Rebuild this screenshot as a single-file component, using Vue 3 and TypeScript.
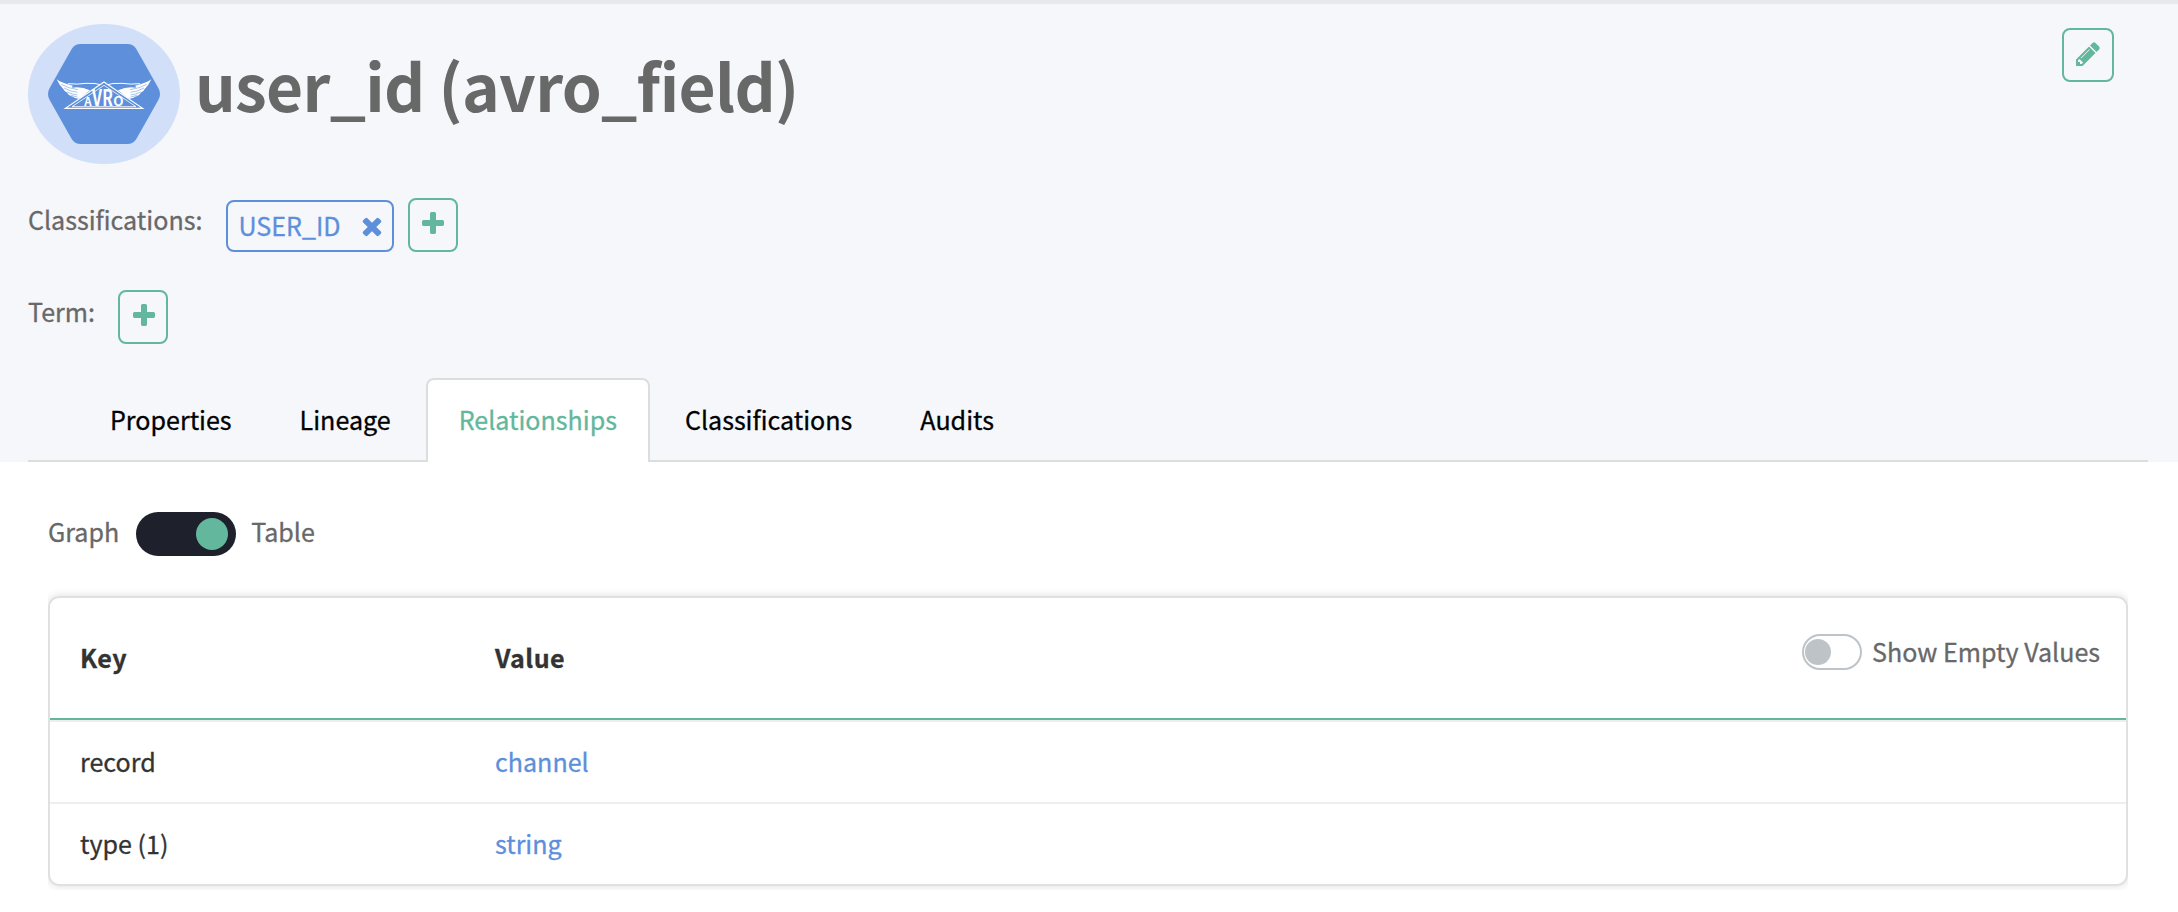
<script setup lang="ts">
import { ref } from 'vue'

interface Tab {
  id: string
  label: string
}

interface RelationRow {
  key: string
  value: string
}

const tabs: Tab[] = [
  { id: 'properties', label: 'Properties' },
  { id: 'lineage', label: 'Lineage' },
  { id: 'relationships', label: 'Relationships' },
  { id: 'classifications', label: 'Classifications' },
  { id: 'audits', label: 'Audits' },
]

const rows: RelationRow[] = [
  { key: 'record', value: 'channel' },
  { key: 'type (1)', value: 'string' },
]

const activeTab = ref('relationships')
const tableView = ref(true)
const showEmpty = ref(false)

const plusPath =
  'M1600 736v192q0 40-28 68t-68 28h-416v416q0 40-28 68t-68 28h-192q-40 0-68-28t-28-68v-416h-416q-40 0-68-28t-28-68v-192q0-40 28-68t68-28h416v-416q0-40 28-68t68-28h192q40 0 68 28t28 68v416h416q40 0 68 28t28 68z'
const timesPath =
  'M1490 1322q0 40-28 68l-136 136q-28 28-68 28t-68-28l-294-294-294 294q-28 28-68 28t-68-28l-136-136q-28-28-28-68t28-68l294-294-294-294q-28-28-28-68t28-68l136-136q28-28 68-28t68 28l294 294 294-294q28-28 68-28t68 28l136 136q28 28 28 68t-28 68l-294 294 294 294q28 28 28 68z'
const pencilPath =
  'M491 1536l91-91-235-235-91 91v107h128v128h107zm523-928q0-22-22-22-10 0-17 7l-542 542q-7 7-7 17 0 22 22 22 10 0 17-7l542-542q7-7 7-17zm-54-192l416 416-832 832h-416v-416zm683 96q0 53-37 90l-166 166-416-416 166-165q36-38 90-38 53 0 91 38l235 234q37 39 37 91z'
</script>

<template>
  <main class="page">
    <header class="header">
      <div class="title-row">
        <div class="avatar">
          <svg class="avro" viewBox="24 42 336 300">
            <path
              class="hex"
              d="M122 42H262Q280 42 289 57L355 174Q365 192 355 210L289 327Q280 342 262 342H122Q104 342 95 327L29 210Q19 192 29 174L95 57Q104 42 122 42Z"
            />
            <g id="wing">
              <path class="fill" d="M50 148Q66 160 98 167L96 173Q122 168 150 181L118 206Q103 205 99 200Q84 196 82 188Q72 184 70 177Q58 166 50 148Z" />
              <path class="cut" d="M64 163Q84 175 114 179M72 174Q90 184 112 187M82 186Q96 193 112 195M92 195Q104 200 112 201" />
              <path class="arc" d="M84 161Q112 164 138 160Q166 158 190 166" />
            </g>
            <use href="#wing" transform="translate(384 0) scale(-1 1)" />
            <path class="tri" d="M192 156L308 235H76Z" />
            <path class="tri-in" d="M192 166L288 230H96Z" />
            <text class="letter" x="133" y="228" font-size="34" textLength="22" lengthAdjust="spacingAndGlyphs">A</text>
            <text class="letter" x="156" y="228" font-size="66" textLength="30" lengthAdjust="spacingAndGlyphs">V</text>
            <text class="letter" x="187" y="228" font-size="66" textLength="32" lengthAdjust="spacingAndGlyphs">R</text>
            <text class="letter" x="220" y="228" font-size="38" textLength="31" lengthAdjust="spacingAndGlyphs">O</text>
          </svg>
        </div>
        <h1 class="title">user_id (avro_field)</h1>
        <button class="btn edit" aria-label="Edit">
          <svg class="icon" viewBox="0 0 1792 1792"><path :d="pencilPath" /></svg>
        </button>
      </div>

      <div class="meta-row">
        <span class="label classifications-label">Classifications:</span>
        <span class="tag">
          <span class="tag-name">USER_ID</span>
          <svg class="icon" viewBox="0 0 1792 1792"><path :d="timesPath" /></svg>
        </span>
        <button class="btn add" aria-label="Add classification">
          <svg class="icon" viewBox="0 0 1792 1792"><path :d="plusPath" /></svg>
        </button>
      </div>

      <div class="meta-row">
        <span class="label term-label">Term:</span>
        <button class="btn add add-term" aria-label="Add term">
          <svg class="icon" viewBox="0 0 1792 1792"><path :d="plusPath" /></svg>
        </button>
      </div>

      <nav class="tabs">
        <a
          v-for="tab in tabs"
          :key="tab.id"
          class="tab"
          :class="{ active: tab.id === activeTab }"
          @click="activeTab = tab.id"
          >{{ tab.label }}</a
        >
      </nav>
    </header>

    <section class="content">
      <div class="view-toggle">
        <span class="view-name">Graph</span>
        <span class="switch" :class="{ on: tableView }" @click="tableView = !tableView"><i class="knob"></i></span>
        <span class="view-name">Table</span>
      </div>

      <div class="card">
        <div class="card-head">
          <span class="key">Key</span>
          <span class="value">Value</span>
          <span class="empty-toggle" @click="showEmpty = !showEmpty">
            <span class="small-switch" :class="{ on: showEmpty }"><i class="small-knob"></i></span>
            <span class="empty-label">Show Empty Values</span>
          </span>
        </div>
        <div v-for="row in rows" :key="row.key" class="card-row">
          <span class="key">{{ row.key }}</span>
          <a class="value link">{{ row.value }}</a>
        </div>
      </div>
    </section>
  </main>
</template>

<style>
body {
  background: #fff;
}
</style>

<style scoped>
.page {
  height: 912px;
  box-sizing: border-box;
  overflow: hidden;
  font-family: 'Noto Sans CJK SC', 'Noto Sans', sans-serif;
  font-size: 25.07px;
  line-height: 36px;
  color: #686868;
  white-space: nowrap;
  -webkit-text-stroke: 0.3px currentColor;
}
.header {
  box-sizing: border-box;
  height: 462px;
  padding: 20px 30px 0 28px;
  border-top: 4px solid #e8e9ed;
  background: #f6f7fb;
}
.title-row {
  display: flex;
  align-items: flex-start;
  height: 140px;
}
.avatar {
  display: flex;
  align-items: center;
  justify-content: center;
  width: 152px;
  height: 140px;
  border-radius: 50%;
  background: #d1dff9;
}
.avro {
  width: 112px;
  height: 100px;
}
.hex {
  fill: #5d8fdb;
}
.fill {
  fill: #fff;
}
.cut {
  fill: none;
  stroke: #5d8fdb;
  stroke-width: 1.6;
}
.arc {
  fill: none;
  stroke: #fff;
  stroke-width: 3;
}
.tri {
  fill: #5d8fdb;
  stroke: #fff;
  stroke-width: 3.5;
}
.tri-in {
  fill: none;
  stroke: #fff;
  stroke-width: 2.5;
}
.letter {
  fill: #fff;
  font-family: 'Noto Sans CJK SC', sans-serif;
  font-weight: 700;
  -webkit-text-stroke: 0;
}
.title {
  margin: 10px 0 0 15px;
  font-size: 64px;
  font-weight: 600;
  letter-spacing: -0.7px;
  line-height: 100px;
  -webkit-text-stroke: 0;
}
.btn {
  display: flex;
  justify-content: center;
  box-sizing: border-box;
  height: 54px;
  padding: 10px 0 0;
  border: 2px solid #62b79c;
  border-radius: 8px;
  background: transparent;
  color: #62b79c;
}
.edit {
  width: 52px;
  margin: 4px 34px 0 auto;
}
.add {
  width: 50px;
}
.add-term {
  padding-left: 2px;
}
.icon {
  flex: none;
  width: 28px;
  height: 28px;
  fill: currentColor;
}
.meta-row {
  display: flex;
  align-items: flex-start;
  height: 54px;
  margin-top: 34px;
}
.meta-row + .meta-row {
  margin-top: 38px;
}
.label {
  margin-top: 3px;
}
.classifications-label {
  width: 198px;
}
.term-label {
  width: 90px;
}
.tag {
  display: flex;
  justify-content: space-between;
  box-sizing: border-box;
  width: 168px;
  height: 52px;
  margin: 2px 14px 0 0;
  padding: 0 6.5px 0 10.5px;
  border: 2px solid #5d8fdb;
  border-radius: 8px;
  color: #5d8fdb;
  line-height: 46px;
}
.tag .icon {
  margin-top: 10px;
}
.tabs {
  display: flex;
  margin-top: 34px;
  padding-left: 48px;
  height: 84px;
  box-sizing: border-box;
  border-bottom: 2px solid #dcdddd;
}
.tab {
  box-sizing: border-box;
  height: 84px;
  padding: 0 31px;
  margin: 0 1px;
  border: 2px solid transparent;
  border-bottom: 0;
  border-radius: 8px 8px 0 0;
  color: #000;
  line-height: 78px;
}
.tab.active {
  border-color: #dcdddd;
  background: #fff;
  color: #62b79c;
}
.content {
  padding: 50px 50px 0 48px;
}
.view-toggle {
  display: flex;
  align-items: flex-start;
  height: 44px;
}
.view-name {
  line-height: 38px;
}
.switch {
  box-sizing: border-box;
  width: 100px;
  height: 44px;
  margin: 0 15px 0 17px;
  padding: 6px 8px;
  border-radius: 22px;
  background: #1e202c;
}
.switch.on {
  display: flex;
  justify-content: flex-end;
}
.knob {
  display: block;
  width: 32px;
  height: 32px;
  border-radius: 50%;
  background: #62b79c;
}
.card {
  box-sizing: border-box;
  height: 290px;
  margin-top: 40px;
  border: 2px solid #e0e0e0;
  border-radius: 11px;
  box-shadow: 0 0 8px rgba(0, 0, 0, 0.14);
  clip-path: inset(-8px 0 -4px 0);
  color: #333;
}
.card-head {
  display: flex;
  box-sizing: border-box;
  height: 122px;
  padding: 0 26px 0 30px;
  border-bottom: 2px solid #62b79c;
  font-weight: 700;
  letter-spacing: 0.45px;
  line-height: 118px;
}
.card-row {
  display: flex;
  box-sizing: border-box;
  height: 82px;
  padding: 0 30px;
  border-top: 2px solid #eee;
  line-height: 78px;
}
.key {
  width: 415px;
}
.link {
  color: #5d8fdb;
}
.empty-toggle {
  display: flex;
  align-items: flex-start;
  height: 36px;
  margin: 36px 0 0 auto;
  color: #686868;
  font-weight: 400;
  letter-spacing: 0;
  line-height: 34px;
}
.small-switch {
  box-sizing: border-box;
  width: 60px;
  height: 36px;
  margin-right: 10px;
  padding: 3px 1px;
  border: 2px solid #bdc3c7;
  border-radius: 18px;
}
.small-switch.on {
  display: flex;
  justify-content: flex-end;
}
.small-knob {
  display: block;
  width: 26px;
  height: 26px;
  border-radius: 50%;
  background: #bdc3c7;
}
</style>
